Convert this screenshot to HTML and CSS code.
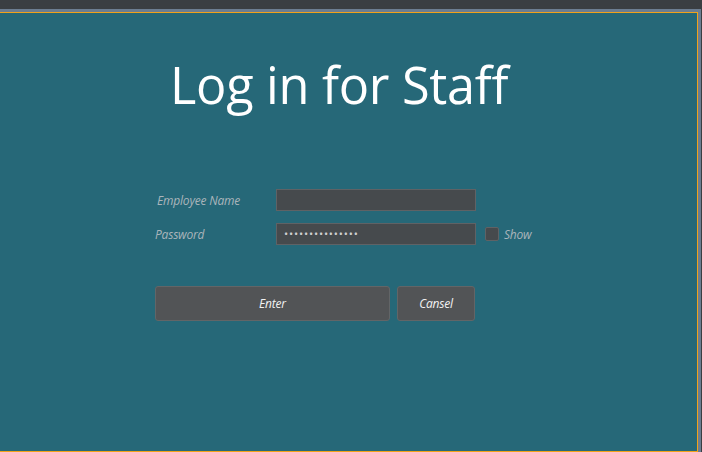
FILE: index.html
```html
<!DOCTYPE html>
<html>
<head>
<meta charset="utf-8">
<link rel="stylesheet" href="styles.css">
</head>
<body>
<div class="top"></div>
<div class="frame">
  <div class="panel">
    <h1 class="title">Log in for Staff</h1>
    <div class="form">
      <div class="row">
        <label class="label label-name">Employee Name</label>
        <div class="input"></div>
      </div>
      <div class="row">
        <label class="label">Password</label>
        <div class="input pass">•••••••••••••••</div>
        <div class="check"></div>
        <span class="show">Show</span>
      </div>
      <div class="buttons">
        <button class="btn enter">Enter</button>
        <button class="btn cancel">Cansel</button>
      </div>
    </div>
  </div>
</div>
</body>
</html>
```
FILE: styles.css
```css
html, body {
  margin: 0;
  padding: 0;
  height: 100%;
  background: #3a3e42;
  overflow: hidden;
}
.top {
  height: 9px;
}
.frame {
  height: 443px;
  box-sizing: border-box;
  border-top: 3px solid #6c7d91;
  border-right: 3px solid #6c7d91;
  margin-right: 1px;
}
.panel {
  height: 100%;
  box-sizing: border-box;
  background: #266878;
  border-top: 1px solid #f2a21a;
  border-right: 1px solid #f2a21a;
  border-bottom: 1px solid #f2a21a;
  font-family: "Open Sans", sans-serif;
}
.title {
  margin: 0;
  padding-top: 39px;
  padding-left: 170px;
  font-weight: 400;
  font-size: 50.5px;
  line-height: 66px;
  color: #ffffff;
  letter-spacing: -0.3px;
}
.form {
  margin-top: 71px;
  padding-left: 155px;
}
.row {
  display: flex;
  align-items: center;
  height: 22px;
  margin-bottom: 12px;
}
.label {
  width: 121px;
  font-style: italic;
  font-size: 12px;
  letter-spacing: -0.2px;
  color: #aab5bb;
}
.label-name {
  padding-left: 2px;
  width: 119px;
}
.input {
  width: 198px;
  height: 20px;
  background: #464a4d;
  border: 1px solid #5f6265;
}
.pass {
  box-sizing: border-box;
  width: 200px;
  height: 22px;
  padding-left: 7px;
  font-size: 11px;
  line-height: 20px;
  letter-spacing: 0.85px;
  color: #d0d0d0;
}
.check {
  width: 12px;
  height: 12px;
  margin-left: 9px;
  background: #464a4d;
  border: 1px solid #5f6265;
  border-radius: 2px;
}
.show {
  margin-left: 5px;
  font-style: italic;
  font-size: 12px;
  letter-spacing: -0.2px;
  color: #aab5bb;
}
.buttons {
  display: flex;
  gap: 7px;
  margin-top: 41px;
}
.btn {
  height: 35px;
  box-sizing: border-box;
  background: #525456;
  border: 1px solid #626567;
  border-radius: 3px;
  font-family: "Open Sans", sans-serif;
  font-style: italic;
  font-size: 12px;
  letter-spacing: -0.2px;
  color: #f2f2f2;
  padding: 0;
}
.enter {
  width: 235px;
}
.cancel {
  width: 78px;
}
```
